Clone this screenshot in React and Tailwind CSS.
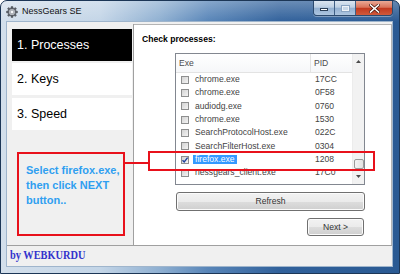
import React from "react";

const processes = [
  { exe: "chrome.exe", pid: "17CC" },
  { exe: "chrome.exe", pid: "0F58" },
  { exe: "audiodg.exe", pid: "0760" },
  { exe: "chrome.exe", pid: "1530" },
  { exe: "SearchProtocolHost.exe", pid: "022C" },
  { exe: "SearchFilterHost.exe", pid: "0304" },
  { exe: "firefox.exe", pid: "1208", checked: true, selected: true },
  { exe: "nessgears_client.exe", pid: "17C0" },
];

function GearIcon() {
  return (
    <svg width="12" height="12" viewBox="0 0 24 24">
      <g fill="#5a5f66" stroke="#2f3338" strokeWidth="0.8">
        <path d="M10.5 1h3l.6 3.1 2 .8 2.6-1.8 2.1 2.1-1.8 2.6.8 2 3.2.7v3l-3.2.6-.8 2 1.8 2.6-2.1 2.1-2.6-1.8-2 .8-.6 3.2h-3l-.6-3.2-2-.8-2.6 1.8-2.1-2.1 1.8-2.6-.8-2L1 13.5v-3l3.1-.7.8-2-1.8-2.6 2.1-2.1 2.6 1.8 2-.8z" />
      </g>
      <circle cx="12" cy="12" r="6.2" fill="#b8bcc2" />
      <circle cx="12" cy="12" r="3.6" fill="#f4f6f8" stroke="#6b7078" strokeWidth="0.8" />
    </svg>
  );
}

function Checkbox({ checked }) {
  return (
    <div className="relative h-[8px] w-[8px] shrink-0 border border-[#8e8f8f] bg-[linear-gradient(135deg,#d3d3d3,#f4f4f4)]">
      {checked && (
        <svg className="absolute left-[-1px] top-[-1px]" width="8" height="8" viewBox="0 0 8 8">
          <path d="M1.5 4.2 L3.2 6 L6.6 1.6" fill="none" stroke="#21439c" strokeWidth="1.4" />
        </svg>
      )}
    </div>
  );
}

function WindowButtons() {
  return (
    <div className="ml-auto mr-[6px] flex h-[15px] self-start overflow-hidden rounded-b-[4px] border border-t-0 border-[#2c4a6e] shadow-[0_1px_0_rgba(255,255,255,0.35)]">
      <div className="flex w-[21px] items-center justify-center border-r border-[#3f5f85] bg-[linear-gradient(to_bottom,#dbe5f0,#bdd0e4_45%,#93b0d1_50%,#aec6e0)]">
        <div className="mt-[3px] h-[3px] w-[8px] border border-[#2b3f57] bg-white" />
      </div>
      <div className="flex w-[21px] items-center justify-center border-r border-[#3f5f85] bg-[linear-gradient(to_bottom,#dbe5f0,#bdd0e4_45%,#93b0d1_50%,#aec6e0)]">
        <div className="h-[7px] w-[9px] border border-[#8aa4c2] bg-[#c9d8e8] shadow-[inset_0_0_0_1px_#eef3f8]" />
      </div>
      <div className="flex w-[36px] items-center justify-center bg-[linear-gradient(to_bottom,#eaa996,#d9735a_45%,#c2391f_52%,#cf5a3c)]">
        <svg width="11" height="9" viewBox="0 0 11 9">
          <path d="M1.5 1 L9.5 8 M9.5 1 L1.5 8" stroke="#4a1a10" strokeWidth="3" strokeLinecap="square" />
          <path d="M1.5 1 L9.5 8 M9.5 1 L1.5 8" stroke="#ffffff" strokeWidth="1.6" strokeLinecap="square" />
        </svg>
      </div>
    </div>
  );
}

function ScrollArrow({ up }) {
  return (
    <svg width="5" height="3" viewBox="0 0 5 3">
      <path d={up ? "M0 3 L2.5 0 L5 3 Z" : "M0 0 L2.5 3 L5 0 Z"} fill="#4a4a4a" />
    </svg>
  );
}

export default function App() {
  return (
    <div className="relative h-[274px] w-[400px] overflow-hidden rounded-t-[7px] border border-[#1c3656] bg-[linear-gradient(to_right,#d3dfeb_0%,#c3d5e7_25%,#8eafd1_40%,#5885b8_52%,#31619b_70%,#2a5a93_100%)] font-['Liberation_Sans',Arial,sans-serif]">
      {/* title bar */}
      <div className="flex h-[21px] items-center bg-[linear-gradient(to_bottom,rgba(255,255,255,0.28),rgba(255,255,255,0))]">
        <div className="ml-[5px]">
          <GearIcon />
        </div>
        <span className="ml-[4px] text-[9px] leading-[11px] text-[#111]">NessGears SE</span>
        <WindowButtons />
      </div>

      {/* client area */}
      <div className="ml-[6px] flex h-[244px] w-[385px] flex-col bg-[#f0f0f0] shadow-[0_0_0_1px_#9fb5cc]">
        <div className="h-[2px]" />
        <div className="flex h-[221px]">
          {/* wizard steps */}
          <div className="flex w-[127px] flex-col border-r border-[#a0a0a0] pl-[5px] pt-[5px]">
            <div className="flex h-[32px] w-[120px] items-center bg-black pl-[5px] text-[12.5px] text-white">
              1. Processes
            </div>
            <div className="mt-[2px] flex h-[32px] w-[120px] items-center bg-white pl-[5px] text-[12.5px] text-black">
              2. Keys
            </div>
            <div className="mt-[3px] flex h-[32px] w-[120px] items-center bg-white pl-[5px] text-[12.5px] text-black">
              3. Speed
            </div>
          </div>

          {/* page content */}
          <div className="flex flex-1 flex-col border-r border-t border-[#b4b4b4] bg-white">
            <div className="ml-[8px] mt-[9px] h-[11px] text-[8.6px] font-bold leading-[11px] text-black">
              Check processes:
            </div>

            <div className="ml-[41px] mt-[8px] flex h-[132px] w-[190px] overflow-hidden border border-[#828790] bg-white">
              <div className="flex flex-1 flex-col">
                <div className="flex h-[19px] shrink-0 border-b border-[#e3e3e3] bg-[linear-gradient(to_bottom,#ffffff,#f6f7f9)] text-[8.6px] text-[#4c4c4c]">
                  <div className="flex w-[135px] items-center border-r border-[#e3e3e3] pl-[3px]">Exe</div>
                  <div className="flex items-center pl-[3px]">PID</div>
                </div>
                {processes.map((p, i) => (
                  <div key={i} className="flex h-[13.33px] shrink-0 items-center text-[8.6px] leading-[9px] text-[#444]">
                    <div className="flex w-[135px] items-center pl-[5px]">
                      <Checkbox checked={p.checked} />
                      <span
                        className={
                          p.selected
                            ? "ml-[4px] bg-[#3399ff] px-[2px] text-white"
                            : "ml-[4px] px-[2px]"
                        }
                      >
                        {p.exe}
                      </span>
                    </div>
                    <div className="pl-[4px]">{p.pid}</div>
                  </div>
                ))}
              </div>
              {/* vertical scrollbar */}
              <div className="flex w-[12px] flex-col items-center border-l border-[#ececec] bg-[#f2f2f2]">
                <div className="flex h-[15px] items-center">
                  <ScrollArrow up />
                </div>
                <div className="flex-1" />
                <div className="h-[10px] w-[10px] rounded-[2px] border border-[#9a9a9a] bg-[linear-gradient(to_right,#f4f4f4,#e2e2e2)]" />
                <div className="flex h-[15px] items-center">
                  <ScrollArrow />
                </div>
              </div>
            </div>

            <button className="ml-[42px] mt-[7px] flex h-[19px] w-[189px] items-center justify-center rounded-[3px] border border-[#707070] bg-[linear-gradient(to_bottom,#f2f2f2,#ebebeb_50%,#dddddd_51%,#cfcfcf)] text-[8.6px] text-[#333] shadow-[inset_0_0_0_1px_#fbfbfb]">
              Refresh
            </button>
            <button className="ml-[173px] mt-[7px] flex h-[18px] w-[57px] items-center justify-center rounded-[3px] border border-[#707070] bg-[linear-gradient(to_bottom,#f2f2f2,#ebebeb_50%,#dddddd_51%,#cfcfcf)] text-[8.6px] text-[#333] shadow-[inset_0_0_0_1px_#fbfbfb]">
              Next &gt;
            </button>
          </div>
        </div>

        {/* footer */}
        <div className="flex h-[21px] items-center border-t border-[#a0a0a0] pl-[3px]">
          <span className="inline-block origin-left scale-x-[0.9] font-['Liberation_Serif','Times_New_Roman',serif] text-[11.5px] font-bold text-[#3333cc]">
            by WEBKURDU
          </span>
        </div>
      </div>

      {/* annotation callout */}
      <div className="absolute left-[16px] top-[151px] h-[84px] w-[108px] border-2 border-[#e8111b] pl-[7px] pt-[9px] text-[11px] font-bold leading-[15px] whitespace-nowrap text-[#2f9ff0]">
        Select firefox.exe,
        <br />
        then click NEXT
        <br />
        button..
      </div>
      <div className="absolute left-[124px] top-[161px] h-[2px] w-[24px] bg-[#e8111b]" />
      <div className="absolute left-[147px] top-[150px] h-[20px] w-[227px] border-2 border-[#e8111b]" />
    </div>
  );
}
